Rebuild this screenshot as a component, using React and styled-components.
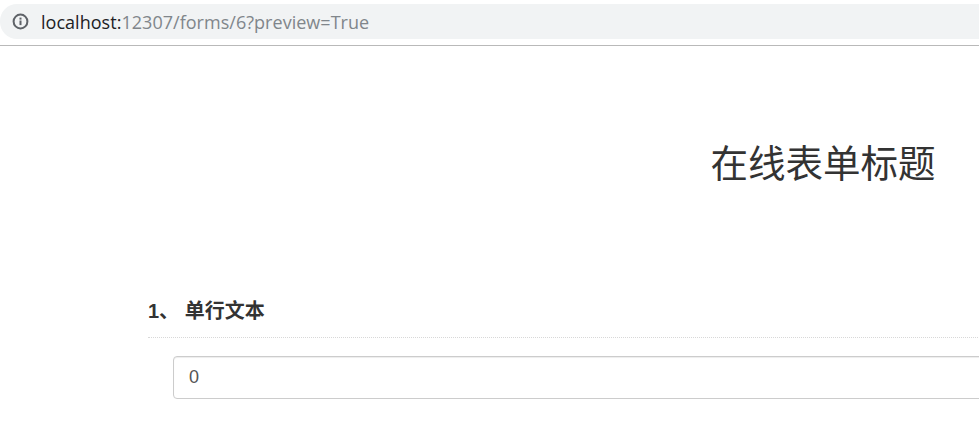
import React from 'react'
import styled, { createGlobalStyle } from "styled-components"

const GlobalStyle = createGlobalStyle`
  html, body {
    margin: 0;
    padding: 0;
    background: #fff;
    overflow: hidden;
  }
  body {
    font-family: "Liberation Sans", "Noto Sans CJK SC", sans-serif;
    color: #333;
  }
`;

const Page = styled.div`
  width: 979px;
  height: 432px;
  overflow: hidden;
`;

const BrowserBar = styled.div`
  height: 46px;
  padding-top: 4px;
  box-sizing: border-box;
  border-bottom: 1px solid #b9b9b9;
`;

const AddressPill = styled.div`
  height: 35px;
  background: #f1f3f4;
  border-radius: 17px 0 0 17px;
  display: flex;
  align-items: center;
  padding-left: 12px;
  gap: 12px;
`;

const Url = styled.div`
  font-family: "Open Sans", "Noto Sans", sans-serif;
  font-size: 18px;
  letter-spacing: 0.03px;
  color: #80868b;
  white-space: nowrap;
`;

const Host = styled.span`
  color: #202124;
`;

const Form = styled.div`
  width: 1350px;
  margin-left: 148px;
`;

const Title = styled.h1`
  margin: 86px 0 0;
  height: 58px;
  line-height: 58px;
  font-size: 37.5px;
  font-weight: 400;
  text-align: center;
  color: #333;
  font-family: "Noto Sans CJK SC", sans-serif;
`;

const Question = styled.div`
  margin-top: 109px;
`;

const QuestionTitle = styled.div`
  box-sizing: border-box;
  height: 39px;
  line-height: 25px;
  font-size: 20px;
  font-weight: 700;
  color: #333;
  border-bottom: 1px dotted #d8d8d8;
`;

const Answer = styled.div`
  padding: 18px 0 0 25px;
`;

const TextInput = styled.div`
  height: 41px;
  line-height: 41px;
  border: 1px solid #ccc;
  border-radius: 4px;
  padding-left: 15px;
  font-size: 18px;
  color: #555;
  box-shadow: inset 0 1px 1px rgba(0, 0, 0, 0.075);
`;

const InfoIcon = () => (
  <svg width="17" height="17" viewBox="0 0 17 17" fill="none">
    <circle cx="8.5" cy="8.5" r="6.9" stroke="#5f6368" strokeWidth="2" />
    <rect x="7.5" y="7.5" width="2" height="4.6" fill="#5f6368" />
    <rect x="7.5" y="4.6" width="2" height="2" fill="#5f6368" />
  </svg>
);

const App = () => {
  return (
    <Page>
      <GlobalStyle />
      <BrowserBar>
        <AddressPill>
          <InfoIcon />
          <Url><Host>localhost:</Host>12307/forms/6?preview=True</Url>
        </AddressPill>
      </BrowserBar>
      <Form>
        <Title>在线表单标题</Title>
        <Question>
          <QuestionTitle>1、 单行文本</QuestionTitle>
          <Answer>
            <TextInput>0</TextInput>
          </Answer>
        </Question>
      </Form>
    </Page>
  )
}

export default App
